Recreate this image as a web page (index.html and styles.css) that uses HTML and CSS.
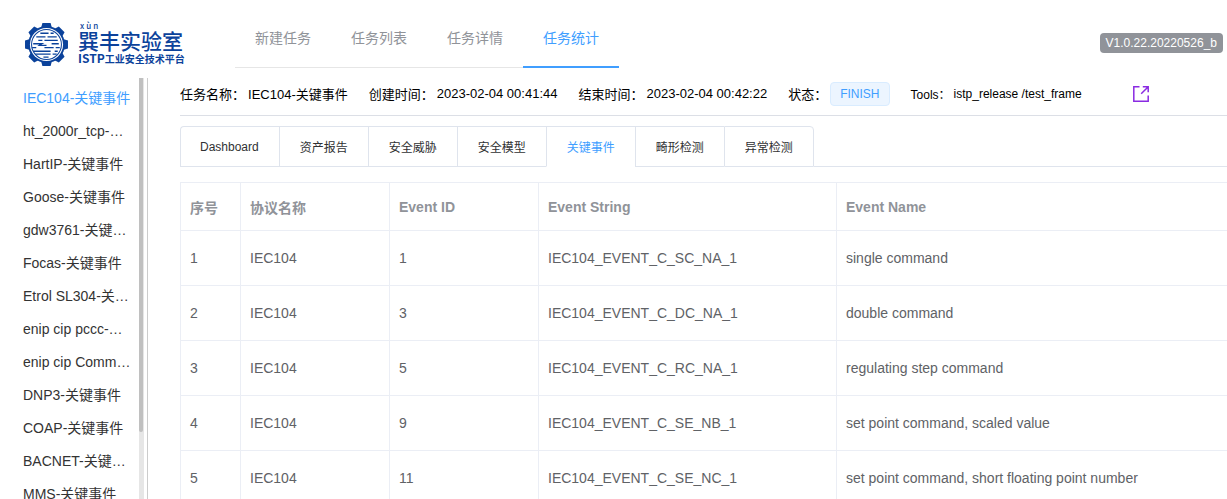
FILE: index.html
```html
<!DOCTYPE html>
<html lang="zh-CN">
<head>
<meta charset="utf-8">
<title>任务统计</title>
<link rel="stylesheet" href="styles.css">
</head>
<body>
<header class="header">
  <div class="logo">
    <svg class="logo-mark" viewBox="0 0 44 44" aria-hidden="true">
      <g fill="#0b429b">
        <circle cx="22" cy="22" r="18"/>
        <path id="tooth" d="M16.6 6 18 1h8l1.4 5z"/>
        <use href="#tooth" transform="rotate(45 22 22)"/>
        <use href="#tooth" transform="rotate(90 22 22)"/>
        <use href="#tooth" transform="rotate(135 22 22)"/>
        <use href="#tooth" transform="rotate(180 22 22)"/>
        <use href="#tooth" transform="rotate(225 22 22)"/>
        <use href="#tooth" transform="rotate(270 22 22)"/>
        <use href="#tooth" transform="rotate(315 22 22)"/>
      </g>
      <circle cx="22" cy="22" r="16.2" fill="#fff"/>
      <circle cx="22" cy="22" r="14.6" fill="none" stroke="#0b429b" stroke-width="1"/>
      <path fill="none" stroke="#0b429b" stroke-width="1.3" d="M16 11h8M26 11h3M12 14.5h9M23 14.5h9M14 18h4M20 18h13M27 21.3h7M8 25h4M20 25h9M31 25h4M9 28.6h17M30 28.6h3M11 31.4h15M28 31.4h4M19 34.4h5"/>
      <path fill="#0b429b" d="M9 20.5h11l-3 1.8h5v1.2H13l2-1.6H9z"/>
    </svg>
    <div class="logo-text">
      <span class="logo-pinyin">xùn</span>
      <span class="logo-name">巽丰实验室</span>
      <span class="logo-sub"><span class="logo-abbr">ISTP</span>工业安全技术平台</span>
    </div>
  </div>
  <nav class="nav">
    <a class="nav-item" href="#new">新建任务</a>
    <a class="nav-item" href="#list">任务列表</a>
    <a class="nav-item" href="#detail">任务详情</a>
    <a class="nav-item active" href="#stats">任务统计</a>
  </nav>
  <span class="version">V1.0.22.20220526_b</span>
</header>
<div class="body">
  <aside class="sidebar">
    <div class="task-list">
      <a class="task active" href="#t1">IEC104-关键事件</a>
      <a class="task" href="#t2">ht_2000r_tcp-关键事件</a>
      <a class="task" href="#t3">HartIP-关键事件</a>
      <a class="task" href="#t4">Goose-关键事件</a>
      <a class="task" href="#t5">gdw3761-关键事件</a>
      <a class="task" href="#t6">Focas-关键事件</a>
      <a class="task" href="#t7">Etrol SL304-关键事件</a>
      <a class="task" href="#t8">enip cip pccc-关键事件</a>
      <a class="task" href="#t9">enip cip Common-关键事件</a>
      <a class="task" href="#t10">DNP3-关键事件</a>
      <a class="task" href="#t11">COAP-关键事件</a>
      <a class="task" href="#t12">BACNET-关键事件</a>
      <a class="task" href="#t13">MMS-关键事件</a>
    </div>
    <div class="scroll-track"><div class="scroll-thumb"></div></div>
  </aside>
  <main class="main">
    <div class="info">
      <div class="info-item"><span>任务名称：</span><span>IEC104-关键事件</span></div>
      <div class="info-item"><span>创建时间：</span><span>2023-02-04 00:41:44</span></div>
      <div class="info-item"><span>结束时间：</span><span>2023-02-04 00:42:22</span></div>
      <div class="info-item"><span>状态：</span><span class="tag">FINISH</span></div>
      <div class="info-item tools"><span>Tools：</span><span>istp_release /test_frame</span></div>
      <a class="export" href="#export" aria-label="导出">
        <svg viewBox="0 0 18 18" width="18" height="18" fill="none" stroke="#8a2be2" stroke-width="1.5" aria-hidden="true">
          <path d="M7.5 1.8H1.8v14.4h14.4v-5.7M10.8 1.8h5.4v5.4M16 2 9.2 8.8"/>
        </svg>
      </a>
    </div>
    <div class="tabs">
      <button class="tab" type="button">Dashboard</button>
      <button class="tab" type="button">资产报告</button>
      <button class="tab" type="button">安全威胁</button>
      <button class="tab" type="button">安全模型</button>
      <button class="tab active" type="button">关键事件</button>
      <button class="tab" type="button">畸形检测</button>
      <button class="tab" type="button">异常检测</button>
      <div class="tabs-rest"></div>
    </div>
    <table class="events">
      <colgroup><col class="c-no"><col class="c-mid"><col class="c-mid"><col class="c-str"><col></colgroup>
      <thead>
        <tr><th>序号</th><th>协议名称</th><th>Event ID</th><th>Event String</th><th>Event Name</th></tr>
      </thead>
      <tbody>
        <tr><td>1</td><td>IEC104</td><td>1</td><td>IEC104_EVENT_C_SC_NA_1</td><td>single command</td></tr>
        <tr><td>2</td><td>IEC104</td><td>3</td><td>IEC104_EVENT_C_DC_NA_1</td><td>double command</td></tr>
        <tr><td>3</td><td>IEC104</td><td>5</td><td>IEC104_EVENT_C_RC_NA_1</td><td>regulating step command</td></tr>
        <tr><td>4</td><td>IEC104</td><td>9</td><td>IEC104_EVENT_C_SE_NB_1</td><td>set point command, scaled value</td></tr>
        <tr><td>5</td><td>IEC104</td><td>11</td><td>IEC104_EVENT_C_SE_NC_1</td><td>set point command, short floating point number</td></tr>
      </tbody>
    </table>
  </main>
</div>
</body>
</html>
```
FILE: styles.css
```css
* { box-sizing: border-box; }
body {
  margin: 0;
  height: 100vh;
  overflow: hidden;
  display: flex;
  flex-direction: column;
  background: #fff;
  color: #222;
  font-family: "Liberation Sans", "Noto Sans CJK SC", sans-serif;
  font-size: 14px;
}
a { color: inherit; text-decoration: none; }

.header {
  flex: none;
  display: flex;
  align-items: flex-start;
  padding: 8px 4px 10px 24px;
}
.logo {
  display: flex;
  gap: 9px;
  width: 211px;
  padding-top: 14px;
  color: #0b429b;
  font-family: "Noto Sans CJK SC", sans-serif;
  white-space: nowrap;
}
.logo-mark { width: 45px; height: 45px; flex: none; }
.logo-text { display: flex; flex-direction: column; }
.logo-pinyin { padding-left: 2px; font-size: 8px; font-weight: 500; line-height: 8px; letter-spacing: 2px; }
.logo-name { font-size: 21px; font-weight: 500; line-height: 20px; }
.logo-sub { font-size: 10px; font-weight: 700; line-height: 16px; }
.logo-abbr { font-size: 12px; }

.nav { display: flex; border-bottom: 1px solid #e6e6e6; }
.nav-item {
  height: 60px;
  margin-bottom: -1px;
  padding: 0 20px;
  line-height: 60px;
  color: #909399;
}
.nav-item.active { color: #409eff; border-bottom: 2px solid #409eff; }
.version {
  margin: 25px 0 0 auto;
  padding: 0 6px;
  border-radius: 4px;
  background: #909399;
  color: #fff;
  font-size: 12px;
  line-height: 20px;
}

.body { flex: 1; min-height: 0; display: flex; }
.sidebar {
  flex: none;
  width: 148px;
  display: flex;
  justify-content: space-between;
  padding-right: 3px;
  border-right: 1px solid #ccc;
}
.task-list { width: 132px; padding: 4px 0 0 23px; overflow: hidden; }
.task {
  display: block;
  height: 33px;
  line-height: 33px;
  overflow: hidden;
  text-overflow: ellipsis;
  white-space: nowrap;
  color: #333;
}
.task.active { color: #409eff; }
.scroll-track { width: 5px; background: #e6e6e6; }
.scroll-thumb { width: 4px; height: 84%; border-radius: 0 0 2px 2px; background: #c0c0c0; }

.main { flex: 1; min-width: 0; padding-left: 32px; overflow: hidden; }
.info {
  display: flex;
  align-items: center;
  gap: 21px;
  height: 38px;
  padding-bottom: 6px;
  border-bottom: 1px solid #dcdfe6;
  font-size: 13px;
  color: #000;
  white-space: nowrap;
}
.info-item { display: flex; align-items: center; gap: 3px; }
.tag {
  padding: 0 9px;
  border: 1px solid #d9ecff;
  border-radius: 4px;
  background: #ecf5ff;
  color: #409eff;
  font-size: 12px;
  line-height: 22px;
}
.tools { font-size: 12px; }
.export { display: flex; margin-left: 29px; }

.tabs { display: flex; margin-top: 10px; }
.tab {
  height: 41px;
  margin: 0;
  padding: 0 20px 0 19px;
  border: 1px solid #dfe4ed;
  border-right-width: 0;
  background: #fff;
  color: #303133;
  font-family: inherit;
  font-size: 12px;
  white-space: nowrap;
}
.tab:not(:first-child) { padding-left: 20px; }
.tab:first-child { border-top-left-radius: 4px; }
.tab:nth-last-child(2) { border-right-width: 1px; border-top-right-radius: 4px; }
.tab.active { color: #409eff; border-bottom-color: #fff; }
.tabs-rest { flex: 1; border-bottom: 1px solid #dfe4ed; }

.events {
  width: 100%;
  margin-top: 15px;
  table-layout: fixed;
  border-collapse: separate;
  border-spacing: 0;
  border-top: 1px solid #ebeef5;
  border-left: 1px solid #ebeef5;
  color: #606266;
}
.c-no { width: 60px; }
.c-mid { width: 149px; }
.c-str { width: 298px; }
.events th, .events td {
  height: 55px;
  padding: 0 9px;
  border-right: 1px solid #ebeef5;
  border-bottom: 1px solid #ebeef5;
  text-align: left;
}
.events th { height: 48px; color: #909399; }
.events tr > :last-child { border-right: 0; }
```
